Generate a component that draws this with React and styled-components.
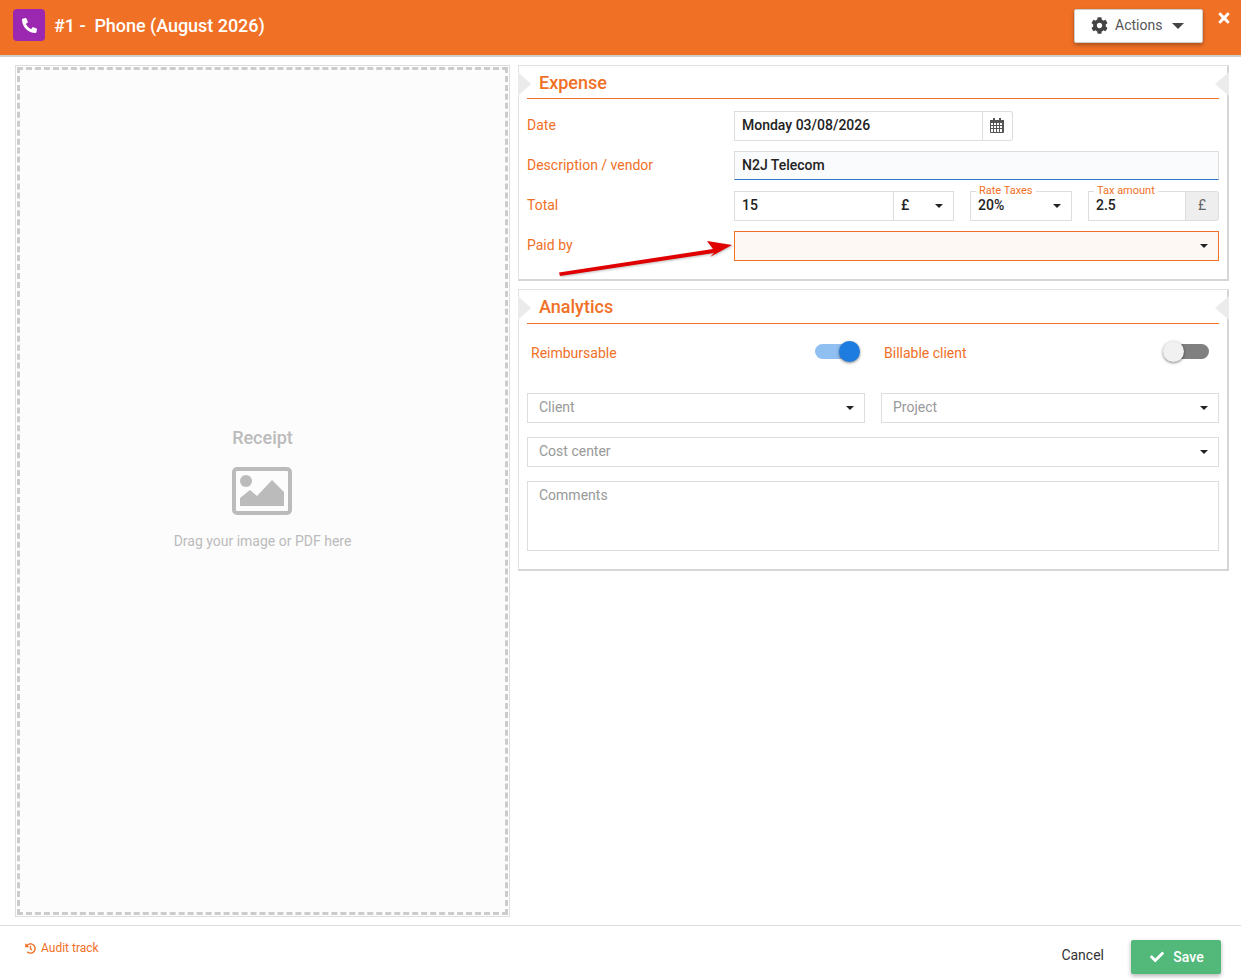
import React from 'react';
import styled, { createGlobalStyle } from 'styled-components';
import { FaCheck, FaCog, FaHistory, FaPhoneAlt, FaTimes } from 'react-icons/fa';

const orange = '#f07026';
const line = '#dddddd';

const Global = createGlobalStyle`
	html, body {
		margin: 0;
		padding: 0;
		background: #fff;
	}
	body {
		font-family: Roboto, "Liberation Sans", sans-serif;
		font-size: 14px;
		color: #222;
	}
	* {
		box-sizing: border-box;
	}
`;

const Page = styled.div`
	display: flex;
	flex-direction: column;
	width: 1241px;
	height: 979px;
	overflow: hidden;
`;

const Header = styled.header`
	display: flex;
	align-items: flex-start;
	flex: none;
	height: 57px;
	padding: 9px 9px 0 13px;
	background: ${orange};
	border-bottom: 2px solid #cfcfcf;
`;

const TypeIcon = styled.div`
	display: flex;
	align-items: center;
	justify-content: center;
	width: 32px;
	height: 32px;
	margin-right: 9px;
	border-radius: 4px;
	background: #9c27b0;
	color: #fff;
	font-size: 15px;
`;

const Title = styled.h1`
	margin: 0;
	color: #fff;
	font-size: 18px;
	font-weight: 500;
	letter-spacing: -0.04px;
	line-height: 34px;
	white-space: pre;
`;

const ActionsButton = styled.button`
	display: flex;
	align-items: center;
	width: 129px;
	height: 34px;
	margin-left: auto;
	padding: 0 0 2px 16px;
	background: #fff;
	border: 1px solid #ccc;
	border-radius: 2px;
	box-shadow: 0 2px 4px rgba(0, 0, 0, 0.3);
	color: #555;
	font: 400 14px Roboto, sans-serif;
	svg {
		margin-right: 7px;
		color: #444;
		font-size: 17px;
	}
`;

const ActionsCaret = styled.span`
	width: 0;
	height: 0;
	margin: 2px 0 0 10px;
	border-left: 6px solid transparent;
	border-right: 6px solid transparent;
	border-top: 6px solid #444;
`;

const CloseButton = styled.div`
	display: flex;
	margin: 1px 0 0 13px;
	color: #fff;
	font-size: 16px;
`;

const Main = styled.main`
	display: grid;
	grid-template-columns: 495px 711px;
	column-gap: 8px;
	flex: 1;
	min-height: 0;
	padding: 8px 12px 8px 15px;
`;

const DropFrame = styled.div`
	padding: 1px;
	border: 1px solid ${line};
`;

const DropZone = styled.div`
	display: flex;
	flex-direction: column;
	align-items: center;
	justify-content: center;
	height: 100%;
	padding-bottom: 7px;
	border: 3px dashed #cccccc;
	background: #fcfcfc;
	color: #bbbbbb;
`;

const DropTitle = styled.div`
	margin-bottom: 17px;
	font-size: 18px;
	font-weight: 500;
	line-height: 24px;
`;

const DropHint = styled.div`
	margin-top: 17px;
	font-size: 14px;
	line-height: 18px;
`;

const Picture = styled.svg`
	margin-right: 1px;
`;

const Column = styled.div`
	display: flex;
	flex-direction: column;
	gap: 8px;
`;

const Panel = styled.section`
	position: relative;
	padding: 0 8px 18px;
	background: #fff;
	border: 1px solid #e2e2e2;
	border-right: 2px solid #d6d6d6;
	border-bottom: 2px solid #d6d6d6;
	&::before,
	&::after {
		content: '';
		position: absolute;
		top: 6px;
		width: 0;
		height: 0;
		border-top: 12px solid transparent;
		border-bottom: 12px solid transparent;
	}
	&::before {
		left: -1px;
		border-left: 13px solid #ebebeb;
	}
	&::after {
		right: -2px;
		border-right: 14px solid #ebebeb;
	}
`;

const PanelTitle = styled.h2`
	display: flex;
	align-items: center;
	height: ${(p) => p.$height}px;
	margin: 0;
	padding: 0 0 0 12px;
	border-bottom: 1px solid ${orange};
	color: ${orange};
	font-size: 18px;
	font-weight: 500;
`;

const Rows = styled.div`
	display: flex;
	flex-direction: column;
	gap: 10px;
	margin-top: 12px;
`;

const FormRow = styled.div`
	position: relative;
	display: grid;
	grid-template-columns: 207px 1fr;
	align-items: center;
	height: 30px;
`;

const Label = styled.label`
	margin-top: ${(p) => p.$shift || -2}px;
	color: ${orange};
	font-size: 14px;
`;

const InputRow = styled.div`
	display: flex;
	gap: 16px;
	height: 30px;
`;

const Group = styled.div`
	position: relative;
	display: flex;
	flex: ${(p) => (p.$width ? `0 0 ${p.$width}px` : 1)};
	width: ${(p) => (p.$width ? `${p.$width}px` : 'auto')};
	height: 30px;
`;

const Field = styled.div`
	display: flex;
	align-items: center;
	flex: ${(p) => (p.$width ? `0 0 ${p.$width}px` : 1)};
	height: ${(p) => p.$height || 30}px;
	min-width: 0;
	padding: 0 7px 2px 7px;
	background: #fff;
	border: 1px solid ${line};
	color: #222;
	font-size: 14px;
	font-weight: 500;
`;

const FocusField = styled(Field)`
	align-self: start;
	padding-bottom: 1px;
	background: #fafbfd;
	border-bottom: 1px solid #2e76c9;
`;

const WarnSelect = styled(Field)`
	justify-content: flex-end;
	padding-right: 10px;
	background: #fdf8f4;
	border-color: ${orange};
`;

const SelectField = styled(Field)`
	justify-content: space-between;
	padding-right: 10px;
	font-weight: ${(p) => (p.$placeholder ? 400 : 500)};
	color: ${(p) => (p.$placeholder ? '#999999' : '#222222')};
	padding-left: ${(p) => (p.$placeholder ? 11 : 7)}px;
`;

const JoinedSelect = styled(SelectField)`
	border-left: 0;
`;

const Comments = styled(Field)`
	align-items: flex-start;
	padding: 5px 11px;
	color: #999999;
	font-weight: 400;
`;

const Caret = styled.span`
	flex: none;
	width: 0;
	height: 0;
	margin-top: 2px;
	border-left: 4px solid transparent;
	border-right: 4px solid transparent;
	border-top: 4px solid #222;
`;

const Addon = styled.div`
	display: flex;
	align-items: center;
	justify-content: center;
	flex: 0 0 ${(p) => p.$width}px;
	padding-bottom: 2px;
	background: ${(p) => p.$bg || '#fff'};
	border: 1px solid ${line};
	border-left: 0;
	border-radius: 0 3px 3px 0;
	color: #666;
`;

const FloatLabel = styled.span`
	position: absolute;
	top: -6px;
	left: 6px;
	padding: 0 3px;
	background: #fff;
	color: ${orange};
	font-size: 11px;
	line-height: 12px;
`;

const Arrow = styled.svg`
	position: absolute;
	left: 28px;
	top: 7px;
	filter: drop-shadow(1px 1px 1px rgba(0, 0, 0, 0.25));
`;

const SwitchGrid = styled.div`
	display: grid;
	grid-template-columns: 338px 338px;
	column-gap: 16px;
	margin-bottom: 13px;
`;

const SwitchRow = styled.div`
	display: flex;
	align-items: center;
	justify-content: space-between;
	height: 56px;
	padding: 0 ${(p) => p.$right}px 0 ${(p) => p.$left}px;
`;

const Track = styled.div`
	position: relative;
	width: 44px;
	height: 15px;
	margin-top: -2px;
	border-radius: 8px;
	background: ${(p) => (p.$on ? '#90bff2' : '#808080')};
`;

const Knob = styled.div`
	position: absolute;
	top: -3px;
	width: 21px;
	height: 21px;
	border-radius: 50%;
	background: ${(p) => (p.$on ? '#1e7be0' : '#f1f1f1')};
	box-shadow: 0 1px 3px rgba(0, 0, 0, 0.5);
	${(p) => (p.$on ? 'right: -1px;' : 'left: -2px;')}
`;

const PairGrid = styled.div`
	display: grid;
	grid-template-columns: 338px 338px;
	column-gap: 16px;
`;

const Stack = styled.div`
	display: flex;
	flex-direction: column;
	gap: 14px;
	> * {
		flex: none;
	}
`;

const Footer = styled.footer`
	display: flex;
	align-items: flex-start;
	flex: none;
	height: 54px;
	padding: 14px 20px 0 25px;
	border-top: 1px solid ${line};
`;

const AuditLink = styled.a`
	display: flex;
	align-items: center;
	height: 16px;
	color: ${orange};
	font-size: 12px;
	svg {
		margin-right: 5px;
		font-size: 11px;
	}
`;

const CancelButton = styled.div`
	margin: 0 27px 0 auto;
	color: #333;
	font-size: 14px;
	line-height: 30px;
`;

const SaveButton = styled.button`
	display: flex;
	align-items: center;
	justify-content: center;
	width: 90px;
	height: 34px;
	padding: 0 0 0 2px;
	background: #53b97a;
	border: 0;
	border-radius: 2px;
	box-shadow: 0 2px 4px rgba(0, 0, 0, 0.3);
	color: #fff;
	font: 500 14px Roboto, sans-serif;
	svg {
		margin-right: 9px;
		font-size: 14px;
	}
`;

const CalendarGlyph = styled.svg`
	margin-right: 2px;
`;

const CalendarIcon = () => (
	<CalendarGlyph width="14" height="15" viewBox="0 0 14 15">
		<path fill="#555" d="M0 2h14v3H0z" />
		<path fill="#555" d="M3 0h2v3H3zM9 0h2v3H9z" />
		<path
			fill="none"
			stroke="#555"
			d="M.5 4.5h13v10H.5zM.5 7.5h13M.5 10.5h13M3.5 4.5v10M6.5 4.5v10M9.5 4.5v10M12.5 4.5v10"
		/>
	</CalendarGlyph>
);

const PictureIcon = () => (
	<Picture width="60" height="48" viewBox="0 0 60 48">
		<rect x="2" y="2" width="56" height="44" rx="3" fill="none" stroke="#bbbbbb" strokeWidth="4" />
		<circle cx="14" cy="14" r="6" fill="#bbbbbb" />
		<path fill="#bbbbbb" d="M8 39v-8l10-8 7 6 15-16 12 12v14z" />
	</Picture>
);

const App = () => (
	<Page>
		<Global />
		<Header>
			<TypeIcon>
				<FaPhoneAlt />
			</TypeIcon>
			<Title>#1 -  Phone (August 2026)</Title>
			<ActionsButton>
				<FaCog />
				Actions
				<ActionsCaret />
			</ActionsButton>
			<CloseButton>
				<FaTimes />
			</CloseButton>
		</Header>

		<Main>
			<DropFrame>
				<DropZone>
					<DropTitle>Receipt</DropTitle>
					<PictureIcon />
					<DropHint>Drag your image or PDF here</DropHint>
				</DropZone>
			</DropFrame>

			<Column>
				<Panel>
					<PanelTitle $height={33}>Expense</PanelTitle>
					<Rows>
						<FormRow>
							<Label>Date</Label>
							<Group $width={279}>
								<Field>Monday 03/08/2026</Field>
								<Addon $width={30}>
									<CalendarIcon />
								</Addon>
							</Group>
						</FormRow>
						<FormRow>
							<Label>Description / vendor</Label>
							<FocusField $height={29}>N2J Telecom</FocusField>
						</FormRow>
						<FormRow>
							<Label>Total</Label>
							<InputRow>
								<Group $width={220}>
									<Field>15</Field>
									<JoinedSelect $width={60}>
										£
										<Caret />
									</JoinedSelect>
								</Group>
								<Group $width={102}>
									<FloatLabel>Rate Taxes</FloatLabel>
									<SelectField>
										20%
										<Caret />
									</SelectField>
								</Group>
								<Group>
									<FloatLabel>Tax amount</FloatLabel>
									<Field>2.5</Field>
									<Addon $width={33} $bg="#eeeeee">£</Addon>
								</Group>
							</InputRow>
						</FormRow>
						<FormRow>
							<Label>Paid by</Label>
							<WarnSelect>
								<Caret />
							</WarnSelect>
							<Arrow width="181" height="40" viewBox="0 0 181 40">
								<path
									fill="#e00000"
									d="M4 34.5 158 11l-6-8 25 4-22 12 4-4L5 38z"
								/>
							</Arrow>
						</FormRow>
					</Rows>
				</Panel>

				<Panel>
					<PanelTitle $height={34}>Analytics</PanelTitle>
					<SwitchGrid>
						<SwitchRow $left={4} $right={6}>
							<Label $shift={2}>Reimbursable</Label>
							<Track $on>
								<Knob $on />
							</Track>
						</SwitchRow>
						<SwitchRow $left={3} $right={10}>
							<Label $shift={2}>Billable client</Label>
							<Track>
								<Knob />
							</Track>
						</SwitchRow>
					</SwitchGrid>
					<Stack>
						<PairGrid>
							<SelectField $placeholder>
								Client
								<Caret />
							</SelectField>
							<SelectField $placeholder>
								Project
								<Caret />
							</SelectField>
						</PairGrid>
						<SelectField $placeholder>
							Cost center
							<Caret />
						</SelectField>
						<Comments $height={70}>Comments</Comments>
					</Stack>
				</Panel>
			</Column>
		</Main>

		<Footer>
			<AuditLink>
				<FaHistory />
				Audit track
			</AuditLink>
			<CancelButton>Cancel</CancelButton>
			<SaveButton>
				<FaCheck />
				Save
			</SaveButton>
		</Footer>
	</Page>
);

export default App;
